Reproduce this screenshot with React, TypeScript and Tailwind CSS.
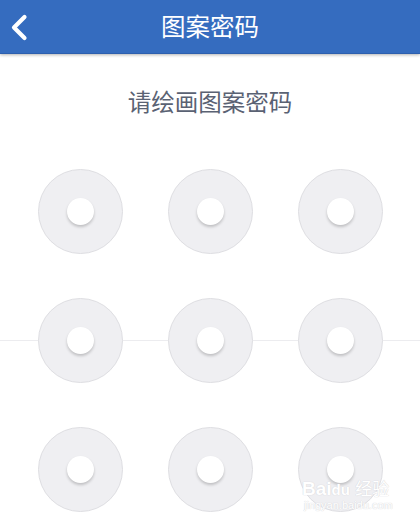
import React from "react";

function Dot() {
  return (
    <div className="w-[85px] h-[85px] rounded-full bg-[#efeff2] border border-[#dedee2] flex items-center justify-center">
      <div className="w-[27px] h-[27px] rounded-full bg-white shadow-[0_2px_3px_rgba(0,0,0,0.2)]" />
    </div>
  );
}

function Row({ line }: { line?: boolean }) {
  return (
    <div className="relative flex justify-center gap-[45px]">
      {line && <div className="absolute left-0 right-0 top-[42px] h-px bg-[#ececef]" />}
      <div className="relative"><Dot /></div>
      <div className="relative"><Dot /></div>
      <div className="relative"><Dot /></div>
    </div>
  );
}

export default function App() {
  return (
    <div
      className="w-[420px] h-[532px] bg-white overflow-hidden relative"
      style={{ fontFamily: '"Noto Sans CJK SC", "Noto Sans", sans-serif' }}
    >
      <div className="relative z-10 h-[54px] bg-[#356cbf] border-b border-[#2d5fae] shadow-[0_1px_3px_rgba(0,0,0,0.3)] flex items-center justify-center">
        <svg className="absolute left-[9px] top-[14px]" width="20" height="27" viewBox="0 0 20 27">
          <path d="M15.5 3 L5 13.5 L15.5 24" fill="none" stroke="white" strokeWidth="4.2" strokeLinecap="round" strokeLinejoin="round" />
        </svg>
        <span className="text-white text-[24.5px] leading-none">图案密码</span>
      </div>
      <div className="mt-[33px] text-center text-[#5a6273] text-[23.5px] leading-[28px]">请绘画图案密码</div>
      <div className="mt-[54px] flex flex-col gap-[44px]">
        <Row />
        <Row line />
        <Row />
      </div>
      <div className="absolute left-[302px] top-[479px] leading-none pointer-events-none select-none">
        <div
          className="text-white text-[19px] font-bold"
          style={{ fontFamily: '"Liberation Sans", "Noto Sans CJK SC", sans-serif', textShadow: "0 0 1px #d6d6da, 0 0 1px #d6d6da" }}
        >
          Bai<span className="text-[15px]">du</span> <span className="font-normal text-[17px]">经验</span>
        </div>
        <div
          className="text-white text-[11px] mt-[2px] ml-[2px]"
          style={{ fontFamily: '"Liberation Sans", sans-serif', textShadow: "0 0 1px #d6d6da, 0 0 1px #d6d6da" }}
        >
          jingyan.baidu.com
        </div>
      </div>
    </div>
  );
}
